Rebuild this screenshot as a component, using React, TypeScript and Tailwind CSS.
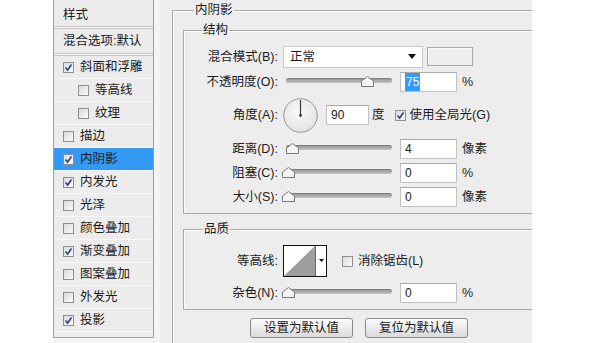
import type { ReactNode } from "react";

const styleItems: { label: string; checked: boolean; sub?: boolean; active?: boolean }[] = [
  { label: "斜面和浮雕", checked: true },
  { label: "等高线", checked: false, sub: true },
  { label: "纹理", checked: false, sub: true },
  { label: "描边", checked: false },
  { label: "内阴影", checked: true, active: true },
  { label: "内发光", checked: true },
  { label: "光泽", checked: false },
  { label: "颜色叠加", checked: false },
  { label: "渐变叠加", checked: true },
  { label: "图案叠加", checked: false },
  { label: "外发光", checked: false },
  { label: "投影", checked: true },
];

function Check({ checked }: { checked: boolean }) {
  return (
    <span className="flex h-[11px] w-[11px] shrink-0 items-center justify-center border border-[#8f8f8f] bg-linear-to-br from-[#dadada] to-[#fbfbfb]">
      {checked ? (
        <svg width="9" height="9" viewBox="0 0 9 9">
          <path d="M1.5 4.5 L3.6 7 L7.5 1.5" fill="none" stroke="#34468c" strokeWidth="1.7" />
        </svg>
      ) : null}
    </span>
  );
}

function Slider({ at }: { at: number }) {
  // at = thumb centre in px from the slider's left edge
  return (
    <div className="relative h-[14px] w-[112px] shrink-0">
      <div className="ml-[3px] mt-[3px] h-[5px] w-[106px] rounded-full border-t border-[#7e7e7e] bg-linear-to-b from-[#999999] to-[#c4c4c4]" />
      <svg
        className="absolute top-[1px]"
        style={{ left: at - 6 }}
        width="13"
        height="11"
        viewBox="0 0 13 11"
      >
        <path d="M0.5 5 L6.5 0.5 L12.5 5 L12.5 10.5 L0.5 10.5 Z" fill="#f4f4f4" stroke="#7a7a7a" />
      </svg>
    </div>
  );
}

function Field({ children, w = "w-[57px]" }: { children: ReactNode; w?: string }) {
  return (
    <div
      className={`${w} flex h-[20px] shrink-0 items-center border border-[#c2c2c2] border-t-[#a9a9a9] bg-white pl-[4px] font-['Liberation_Sans','Noto_Sans_CJK_SC',sans-serif] text-[12px]`}
    >
      {children}
    </div>
  );
}

function Row({ label, h = "h-[23px]", className = "", children }: { label: string; h?: string; className?: string; children: ReactNode }) {
  return (
    <div className={`flex items-center ${h} ${className}`}>
      <div className="w-[94px] shrink-0 text-right">{label}</div>
      <div className="ml-[5px] flex items-center">{children}</div>
    </div>
  );
}

function SliderRow({ label, at, value, unit, className = "" }: { label: string; at: number; value: ReactNode; unit: string; className?: string }) {
  return (
    <Row label={label} className={className}>
      <Slider at={at} />
      <div className="ml-[5px]">
        <Field>{value}</Field>
      </div>
      <span className="ml-[5px]">{unit}</span>
    </Row>
  );
}

function Dial() {
  return (
    <svg width="35" height="35" viewBox="0 0 35 35" className="shrink-0">
      <defs>
        <radialGradient id="dialFill" cx="45%" cy="40%" r="60%">
          <stop offset="0%" stopColor="#fbfbfb" />
          <stop offset="100%" stopColor="#e2e2e2" />
        </radialGradient>
      </defs>
      <circle cx="17.5" cy="17.5" r="16.8" fill="url(#dialFill)" stroke="#959595" />
      <line x1="17.5" y1="17.5" x2="17.5" y2="2" stroke="#3a3a3a" strokeWidth="1.2" />
      <circle cx="17.5" cy="17.5" r="1.4" fill="#3a3a3a" />
    </svg>
  );
}

function Contour() {
  return (
    <svg width="44" height="32" viewBox="0 0 44 32" className="shrink-0">
      <rect x="0.5" y="0.5" width="43" height="31" fill="#fff" stroke="#111" />
      <polygon points="1,31 32,1 32,31" fill="#9e9e9e" />
      <line x1="32.5" y1="1" x2="32.5" y2="31" stroke="#666" />
      <polygon points="36,14 41,14 38.5,17" fill="#111" />
    </svg>
  );
}

export default function App() {
  return (
    <div className="flex h-[343px] w-[595px] overflow-hidden bg-white font-['Liberation_Sans','Noto_Sans_CJK_SC',sans-serif] text-[12.5px] leading-[18px] text-[#1b1b1b]">
      <div className="w-[53px] shrink-0" />

      <div className="flex h-[343px] w-[479px] shrink-0 overflow-hidden bg-[#ededed]">
        {/* style list */}
        <aside className="w-[107px] shrink-0 bg-[#f4f4f4]">
          <div className="h-[338px] w-[101px] border-x border-b border-[#9f9f9f] bg-[#ececec]">
            <div className="flex h-[26px] items-center pl-[9px] pt-[4px]">样式</div>
            <div className="h-[3px] border-y border-[#c6c6c6] bg-[#f8f8f8]" />
            <div className="flex h-[24px] items-center pl-[9px]">混合选项:默认</div>
            <div className="h-[3px] border-y border-[#c6c6c6] bg-[#f8f8f8]" />
            {styleItems.map((item) => (
              <div
                key={item.label}
                className={`flex h-[23px] items-center gap-[6px] border-b border-[#f8f8f8] ${
                  item.sub ? "pl-[24px]" : "pl-[9px]"
                } ${item.active ? "bg-[#3399f3]" : ""}`}
              >
                <Check checked={item.checked} />
                <span>{item.label}</span>
              </div>
            ))}
          </div>
        </aside>

        {/* inner shadow settings */}
        <fieldset className="ml-[12px] mt-[1px] h-[400px] w-[420px] min-w-0 shrink-0 border border-[#a9a9a9] pl-[10px] shadow-[inset_1px_1px_0_#fbfbfb]">
          <legend className="ml-[11px] px-[1px] leading-[18px]">内阴影</legend>

          <fieldset className="mt-[2px] w-[400px] min-w-0 border border-[#a9a9a9] shadow-[inset_1px_1px_0_#fbfbfb]">
            <legend className="ml-[18px] px-[1px] leading-[18px]">结构</legend>
            <div className="flex flex-col pb-[5px]">
              <Row label="混合模式(B):" className="mt-[6px]">
                <div className="flex h-[22px] w-[140px] items-center justify-between border border-[#c9c9c9] bg-white pl-[6px] pr-[6px]">
                  <span>正常</span>
                  <svg width="8" height="5" viewBox="0 0 8 5">
                    <polygon points="0,0 8,0 4,5" fill="#111" />
                  </svg>
                </div>
                <div className="ml-[4px] h-[19px] w-[46px] border border-[#a8a8a8] bg-[#efefef] shadow-[inset_1px_1px_0_#fafafa]" />
              </Row>

              <SliderRow
                label="不透明度(O):"
                at={84}
                className="mt-[2px]"
                value={<span className="bg-[#3399ff] px-[1px] text-white">75</span>}
                unit="%"
              />

              <Row label="角度(A):" h="h-[36px]" className="mt-[4px]">
                <Dial />
                <div className="ml-[8px]">
                  <Field w="w-[43px]">90</Field>
                </div>
                <span className="ml-[3px]">度</span>
                <span className="ml-[10px]">
                  <Check checked />
                </span>
                <span className="ml-[4px]">使用全局光(G)</span>
              </Row>

              <SliderRow label="距离(D):" at={9} value="4" unit="像素" className="mt-[4px]" />
              <SliderRow label="阻塞(C):" at={5} value="0" unit="%" className="mt-[1px]" />
              <SliderRow label="大小(S):" at={5} value="0" unit="像素" className="mt-[1px]" />
            </div>
          </fieldset>

          <fieldset className="mt-[6px] w-[400px] min-w-0 border border-[#a9a9a9] shadow-[inset_1px_1px_0_#fbfbfb]">
            <legend className="ml-[19px] px-[1px] leading-[18px]">品质</legend>
            <div className="flex flex-col pb-[5px]">
              <Row label="等高线:" h="h-[36px]" className="mt-[5px]">
                <Contour />
                <span className="ml-[15px]">
                  <Check checked={false} />
                </span>
                <span className="ml-[5px]">消除锯齿(L)</span>
              </Row>
              <SliderRow label="杂色(N):" at={5} value="0" unit="%" className="mt-[2px]" />
            </div>
          </fieldset>

          <div className="ml-[67px] mt-[8px] flex gap-[12px]">
            <button
              type="button"
              className="h-[20px] w-[103px] rounded-[3px] border border-[#8a8a8a] bg-linear-to-b from-[#fdfdfd] to-[#dadada] text-center leading-[18px]"
            >
              设置为默认值
            </button>
            <button
              type="button"
              className="h-[20px] w-[103px] rounded-[3px] border border-[#8a8a8a] bg-linear-to-b from-[#fdfdfd] to-[#dadada] text-center leading-[18px]"
            >
              复位为默认值
            </button>
          </div>
        </fieldset>
      </div>
    </div>
  );
}
